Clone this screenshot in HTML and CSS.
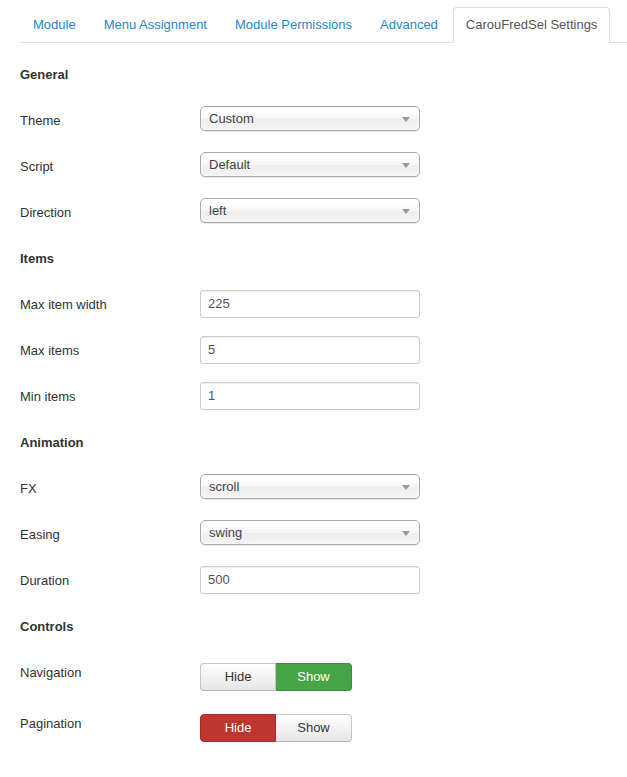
FILE: index.html
```html
<!DOCTYPE html>
<html>
<head>
<meta charset="utf-8">
<link rel="stylesheet" href="styles.css">
</head>
<body>
<div class="page">
  <ul class="tabs">
    <li class="tab"><a>Module</a></li>
    <li class="tab"><a>Menu Assignment</a></li>
    <li class="tab"><a>Module Permissions</a></li>
    <li class="tab"><a>Advanced</a></li>
    <li class="tab active"><a>CarouFredSel Settings</a></li>
  </ul>
  <div class="form">
    <div class="row heading">General</div>
    <div class="row"><div class="label">Theme</div><div class="select">Custom<span class="arrow"></span></div></div>
    <div class="row"><div class="label">Script</div><div class="select">Default<span class="arrow"></span></div></div>
    <div class="row"><div class="label">Direction</div><div class="select">left<span class="arrow"></span></div></div>

    <div class="row heading">Items</div>
    <div class="row"><div class="label">Max item width</div><div class="input">225</div></div>
    <div class="row"><div class="label">Max items</div><div class="input">5</div></div>
    <div class="row"><div class="label">Min items</div><div class="input">1</div></div>

    <div class="row heading">Animation</div>
    <div class="row"><div class="label">FX</div><div class="select">scroll<span class="arrow"></span></div></div>
    <div class="row"><div class="label">Easing</div><div class="select">swing<span class="arrow"></span></div></div>
    <div class="row"><div class="label">Duration</div><div class="input">500</div></div>

    <div class="row heading">Controls</div>
    <div class="row btnrow"><div class="label">Navigation</div>
      <div class="group"><span class="btn">Hide</span><span class="btn success">Show</span></div></div>
    <div class="row btnrow"><div class="label">Pagination</div>
      <div class="group"><span class="btn danger">Hide</span><span class="btn">Show</span></div></div>
  </div>
</div>
</body>
</html>
```

FILE: styles.css
```css
html, body {
  margin: 0;
  padding: 0;
  background: #fff;
}
body {
  font-family: "Liberation Sans", Arial, sans-serif;
  font-size: 13px;
  color: #333;
}
.page {
  padding: 7px 0 0 20px;
}
.tabs {
  list-style: none;
  margin: 0;
  padding: 0;
  display: flex;
  border-bottom: 1px solid #ddd;
}
.tab {
  margin-right: 2px;
  margin-bottom: -1px;
}
.tab a {
  display: block;
  padding: 8px 12px;
  line-height: 18px;
  border: 1px solid transparent;
  border-radius: 4px 4px 0 0;
  color: #1c87d2;
}
.tab.active a {
  color: #555;
  border-color: #ddd;
  border-bottom-color: #fff;
  background: #fff;
}
.form {
  padding-top: 9px;
}
.row {
  display: flex;
  align-items: flex-start;
  height: 46px;
}
.heading {
  font-weight: bold;
  line-height: 46px;
  color: #333;
}
.label {
  width: 180px;
  line-height: 46px;
  flex: none;
}
.select {
  position: relative;
  box-sizing: border-box;
  width: 220px;
  height: 25px;
  margin-top: 8px;
  padding-left: 8px;
  line-height: 23px;
  border: 1px solid #aaa;
  border-radius: 5px;
  background: linear-gradient(#fff 20%, #f6f6f6 50%, #eee 52%, #f4f4f4 100%);
  box-shadow: 0 0 3px #fff inset, 0 1px 1px rgba(0,0,0,0.1);
  color: #444;
}
.arrow {
  position: absolute;
  right: 9px;
  top: 10px;
  width: 0;
  height: 0;
  border-left: 4px solid transparent;
  border-right: 4px solid transparent;
  border-top: 5px solid #999;
}
.input {
  box-sizing: border-box;
  width: 220px;
  height: 28px;
  margin-top: 8px;
  padding-left: 7px;
  line-height: 26px;
  border: 1px solid #ccc;
  border-radius: 3px;
  box-shadow: inset 0 1px 1px rgba(0,0,0,0.075);
  color: #555;
}
.btnrow {
  height: 51px;
}
.group {
  display: flex;
  margin-top: 13px;
}
.btn {
  box-sizing: border-box;
  width: 76px;
  height: 28px;
  line-height: 26px;
  text-align: center;
  border: 1px solid #c5c5c5;
  border-bottom-color: #b3b3b3;
  background: linear-gradient(#fff, #e6e6e6);
  color: #333;
}
.btn:first-child {
  border-radius: 4px 0 0 4px;
}
.btn:last-child {
  border-radius: 0 4px 4px 0;
  border-left: 0;
}
.btn.success {
  background: #46a546;
  border-color: #3d8f3d;
  color: #fff;
}
.btn.danger {
  background: #bd362f;
  border-color: #a52f29;
  color: #fff;
}
```
